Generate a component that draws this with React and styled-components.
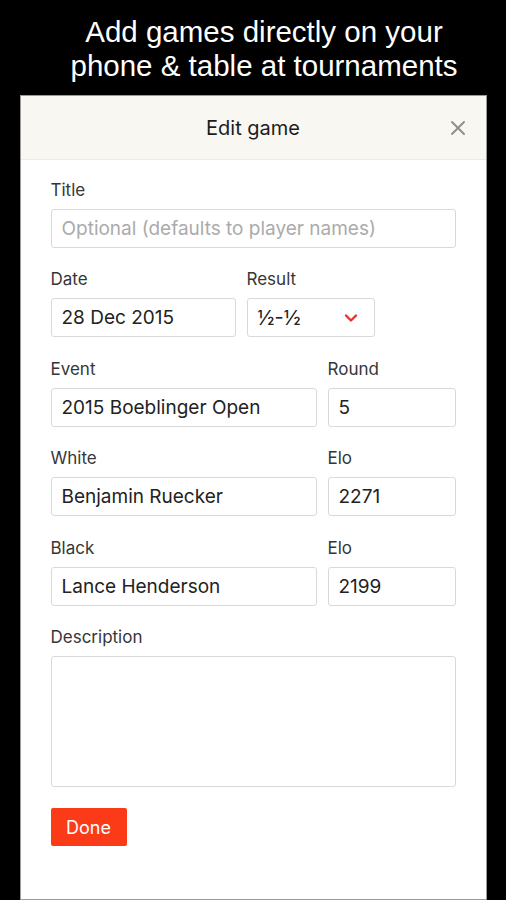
import React from "react"
import styled, { createGlobalStyle } from "styled-components"

const GlobalStyle = createGlobalStyle`
  html, body {
    margin: 0;
    padding: 0;
    background: #000000;
  }
  body {
    font-family: "Liberation Sans", Arial, sans-serif;
  }
`

const Screen = styled.div`
  width: 506px;
  height: 900px;
  background: #000000;
  display: flex;
  flex-direction: column;
  align-items: center;
  overflow: hidden;
`

const Headline = styled.h1`
  margin: 15px 0 0;
  padding-left: 22px;
  color: #ffffff;
  font-family: "Liberation Sans", Arial, sans-serif;
  font-weight: 400;
  font-size: 29.5px;
  line-height: 34px;
  text-align: center;
  height: 80px;
  white-space: nowrap;
`

const Panel = styled.div`
  width: 465px;
  height: 803px;
  background: #ffffff;
  border: 1px solid #9a9a9a;
  display: flex;
  flex-direction: column;
`

const Header = styled.div`
  height: 63px;
  flex-shrink: 0;
  background: #f9f7f2;
  border-bottom: 1px solid #eeebe4;
  display: flex;
  align-items: center;
  justify-content: center;
  position: relative;
`

const HeaderTitle = styled.div`
  font-family: "Inter", "Liberation Sans", sans-serif;
  font-size: 20px;
  color: #1c1c1c;
`

const Close = styled.button`
  position: absolute;
  right: 19px;
  top: 23px;
  width: 18px;
  height: 18px;
  padding: 0;
  border: none;
  background: none;
  display: flex;
  align-items: center;
  justify-content: center;
`

const Form = styled.div`
  padding: 20px 30px 0 30px;
  display: flex;
  flex-direction: column;
`

const Row = styled.div`
  display: grid;
  grid-template-columns: ${props => props.cols || "1fr"};
  column-gap: 11px;
  margin-bottom: 21.4px;
`

const Field = styled.div`
  display: flex;
  flex-direction: column;
`

const Label = styled.label`
  font-family: "Inter", "Liberation Sans", sans-serif;
  font-size: 17px;
  line-height: 20px;
  color: #363636;
  margin-bottom: 9px;
`

const Input = styled.div`
  box-sizing: border-box;
  height: 39px;
  border: 1px solid #d9d9d9;
  border-radius: 3px;
  padding: 0 16px 0 10px;
  display: flex;
  align-items: center;
  justify-content: space-between;
  font-family: "Inter", "Liberation Sans", sans-serif;
  font-size: 19px;
  color: ${props => (props.placeholder ? "#ababab" : "#222222")};
  background: #ffffff;
`

const Fraction = styled.span`
  font-size: 20px;
  color: #222222;
`

const TextArea = styled.div`
  box-sizing: border-box;
  height: 131px;
  border: 1px solid #d9d9d9;
  border-radius: 3px;
`

const DoneButton = styled.button`
  align-self: flex-start;
  width: 76px;
  height: 38px;
  margin-top: 0;
  border: none;
  border-radius: 2px;
  background: #fb3b18;
  color: #ffffff;
  font-family: "Inter", "Liberation Sans", sans-serif;
  font-size: 18px;
`

const Chevron = () => (
  <svg width="14" height="10" viewBox="0 0 14 10">
    <path d="M2 2.5 L7 7.5 L12 2.5" fill="none" stroke="#e8322a" strokeWidth="2.4" strokeLinecap="round" strokeLinejoin="round" />
  </svg>
)

const Cross = () => (
  <svg width="16" height="16" viewBox="0 0 16 16">
    <path d="M2 2 L14 14 M14 2 L2 14" stroke="#8d8d8d" strokeWidth="1.9" strokeLinecap="round" />
  </svg>
)

const App = () => (
  <>
    <GlobalStyle />
    <Screen>
      <Headline>
        Add games directly on your
        <br />
        phone &amp; table at tournaments
      </Headline>
      <Panel>
        <Header>
          <HeaderTitle>Edit game</HeaderTitle>
          <Close aria-label="Close"><Cross /></Close>
        </Header>
        <Form>
          <Row>
            <Field>
              <Label>Title</Label>
              <Input placeholder>Optional (defaults to player names)</Input>
            </Field>
          </Row>
          <Row cols="185px 128px">
            <Field>
              <Label>Date</Label>
              <Input>28 Dec 2015</Input>
            </Field>
            <Field>
              <Label>Result</Label>
              <Input>
                <Fraction>½-½</Fraction>
                <Chevron />
              </Input>
            </Field>
          </Row>
          <Row cols="1fr 128px">
            <Field>
              <Label>Event</Label>
              <Input>2015 Boeblinger Open</Input>
            </Field>
            <Field>
              <Label>Round</Label>
              <Input>5</Input>
            </Field>
          </Row>
          <Row cols="1fr 128px">
            <Field>
              <Label>White</Label>
              <Input>Benjamin Ruecker</Input>
            </Field>
            <Field>
              <Label>Elo</Label>
              <Input>2271</Input>
            </Field>
          </Row>
          <Row cols="1fr 128px">
            <Field>
              <Label>Black</Label>
              <Input>Lance Henderson</Input>
            </Field>
            <Field>
              <Label>Elo</Label>
              <Input>2199</Input>
            </Field>
          </Row>
          <Row>
            <Field>
              <Label>Description</Label>
              <TextArea />
            </Field>
          </Row>
          <DoneButton>Done</DoneButton>
        </Form>
      </Panel>
    </Screen>
  </>
)

export default App
